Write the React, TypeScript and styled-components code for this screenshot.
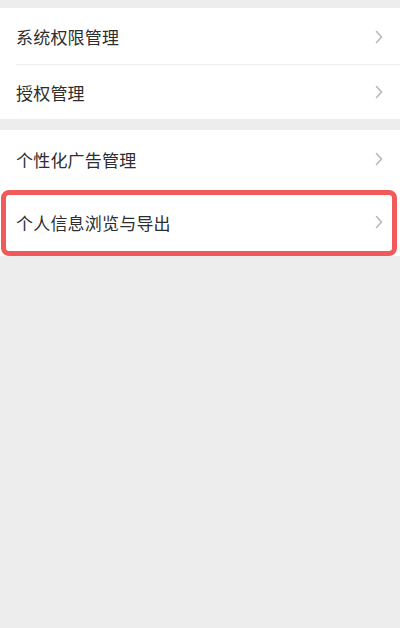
import * as React from "react"
import styled, { createGlobalStyle } from "styled-components"

const GlobalStyle = createGlobalStyle`
  html, body {
    margin: 0;
    padding: 0;
    background: #ededed;
  }
  body {
    font-family: "Noto Sans CJK SC", "Noto Sans", sans-serif;
  }
`

const Page = styled.div`
  width: 400px;
  min-height: 628px;
  background: #ededed;
  padding-top: 8px;
  box-sizing: border-box;
`

const Section = styled.div`
  background: #ffffff;
  margin-bottom: 11px;
`

const Row = styled.div<{ $height: number; $divider?: boolean; $highlighted?: boolean }>`
  position: relative;
  height: ${props => props.$height}px;
  display: flex;
  align-items: center;
  justify-content: space-between;
  padding: 0 16px 0 16px;
  box-sizing: border-box;
  &::before {
    content: "";
    display: ${props => (props.$divider ? "block" : "none")};
    position: absolute;
    left: 16px;
    right: 0;
    bottom: 0;
    height: 1px;
    background: #eeeeee;
  }
  &::after {
    content: "";
    display: ${props => (props.$highlighted ? "block" : "none")};
    position: absolute;
    top: 2px;
    left: 1px;
    right: 3px;
    bottom: 0;
    border: 5px solid #f25a5a;
    border-radius: 8px;
    pointer-events: none;
  }
`

const Label = styled.span`
  font-size: 17px;
  color: #2e2e2e;
  letter-spacing: 0.2px;
`

const Chevron = () => (
  <svg width="10" height="14" viewBox="0 0 10 14">
    <path d="M2.5 1.5 L7.5 7 L2.5 12.5" fill="none" stroke="#b8b8b8" strokeWidth="1.6" strokeLinecap="round" strokeLinejoin="round" />
  </svg>
)

const groups = [
  [
    { label: "系统权限管理", height: 57, divider: true },
    { label: "授权管理", height: 54 },
  ],
  [
    { label: "个性化广告管理", height: 58 },
    { label: "个人信息浏览与导出", height: 68, highlighted: true },
  ],
]

export default function App() {
  return (
    <Page>
      <GlobalStyle />
      {groups.map((items, g) => (
        <Section key={g}>
          {items.map(item => (
            <Row
              key={item.label}
              $height={item.height}
              $divider={item.divider}
              $highlighted={item.highlighted}
            >
              <Label>{item.label}</Label>
              <Chevron />
            </Row>
          ))}
        </Section>
      ))}
    </Page>
  )
}
